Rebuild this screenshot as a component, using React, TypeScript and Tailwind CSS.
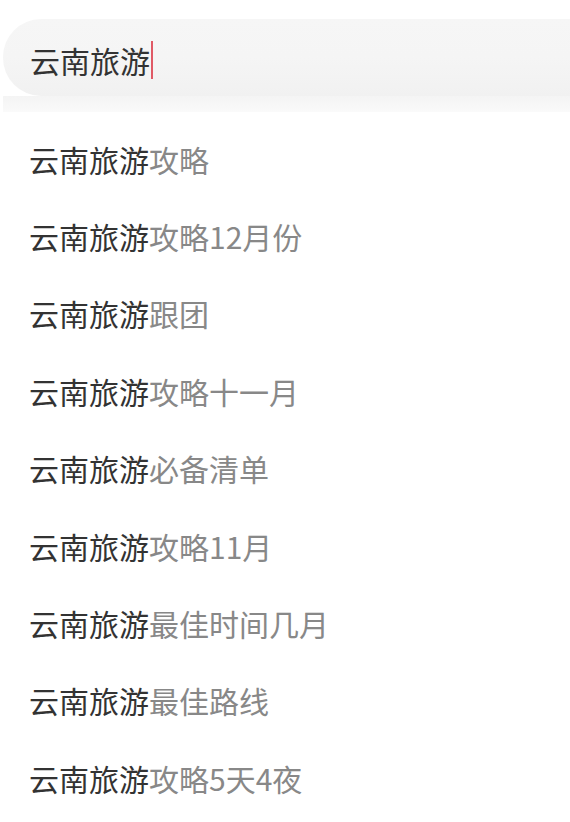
import React from "react";

const items = [
  "攻略",
  "攻略12月份",
  "跟团",
  "攻略十一月",
  "必备清单",
  "攻略11月",
  "最佳时间几月",
  "最佳路线",
  "攻略5天4夜",
];

export default function App() {
  return (
    <div
      className="w-[570px] h-[822px] bg-white overflow-hidden"
      style={{ fontFamily: '"Noto Sans CJK SC", "Noto Sans", sans-serif' }}
    >
      <div className="pt-[19px]">
        <div className="ml-[3px] h-[77px] rounded-l-[38px] bg-gradient-to-b from-[#f6f6f6] via-[#f5f5f5] to-[#f1f1f1] flex items-center pl-[27px] pt-[4px]">
          <span className="text-[30px] leading-none text-[#333333]">云南旅游</span>
          <span className="w-[2px] h-[38px] bg-[#e05a66] ml-[1px]" />
        </div>
        <div className="ml-[3px] h-[16px] bg-gradient-to-b from-[#f4f4f4] to-[#fafafa]" />
      </div>
      <div className="flex flex-col pt-[8px]">
        {items.map((s, i) => (
          <div key={i} className="h-[77.4px] flex items-center pl-[29px] text-[30px] leading-none">
            <span className="text-[#333333]">云南旅游</span>
            <span className="text-[#888888]">{s}</span>
          </div>
        ))}
      </div>
    </div>
  );
}
